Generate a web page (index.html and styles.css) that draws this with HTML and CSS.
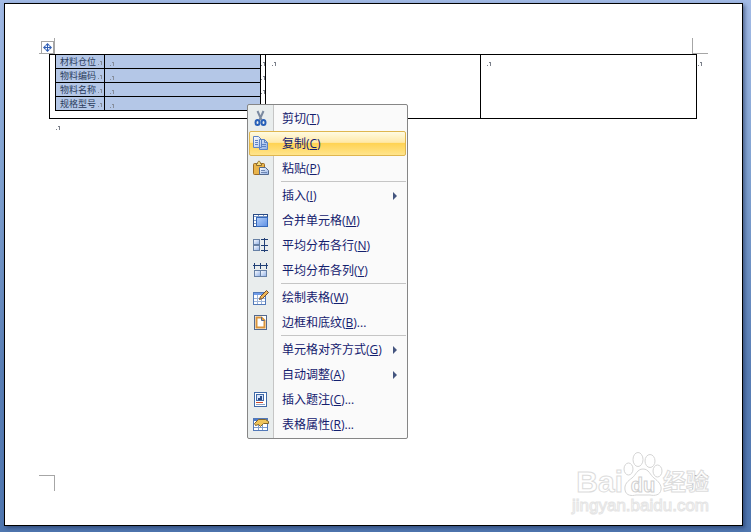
FILE: index.html
```html
<!DOCTYPE html>
<html lang="zh-CN">
<head>
<meta charset="utf-8">
<title>表格右键菜单</title>
<link rel="stylesheet" href="styles.css">
</head>
<body>
<svg class="defs" width="0" height="0">
  <symbol id="mark" viewBox="0 0 5 4"><path d="M0 3h1v1H0zM2 0h2v4H3V1H2z" fill="#7b808a"/></symbol>
  <linearGradient id="blue" x1="0" y1="0" x2="1" y2="1"><stop offset="0" stop-color="#fff"/><stop offset="1" stop-color="#8fb0e6"/></linearGradient>
  <linearGradient id="cell" x1="0" y1="0" x2="1" y2="1"><stop offset="0" stop-color="#b4d0fa"/><stop offset="1" stop-color="#5d8fe4"/></linearGradient>
</svg>

<main class="page">
  <div class="crops crops-top">
    <span class="crop top-left">
      <svg class="handle" width="14" height="14"><rect x=".5" y=".5" width="12" height="12" fill="#fff" stroke="#a5a5a5"/><path d="M6.500 3v7M3 6.500h7" stroke="#315fb5"/><path d="M4 4.500L6.500 2 9 4.500zM4 8.500L6.500 11 9 8.500zM4.500 4L2 6.500 4.500 9zM8.500 4L11 6.500 8.500 9z" fill="#315fb5"/></svg>
    </span>
    <span class="crop top-right"></span>
  </div>

  <table class="layout">
    <tr>
      <td class="holder">
        <div class="nested">
          <table class="fields">
            <tr><th>材料仓位<svg class="mark"><use href="#mark"/></svg></th><td><svg class="mark"><use href="#mark"/></svg></td></tr>
            <tr><th>物料编码<svg class="mark"><use href="#mark"/></svg></th><td><svg class="mark"><use href="#mark"/></svg></td></tr>
            <tr><th>物料名称<svg class="mark"><use href="#mark"/></svg></th><td><svg class="mark"><use href="#mark"/></svg></td></tr>
            <tr><th>规格型号<svg class="mark"><use href="#mark"/></svg></th><td><svg class="mark"><use href="#mark"/></svg></td></tr>
          </table>
          <div class="row-marks">
            <svg class="mark"><use href="#mark"/></svg>
            <svg class="mark"><use href="#mark"/></svg>
            <svg class="mark"><use href="#mark"/></svg>
          </div>
        </div>
      </td>
      <td><svg class="mark"><use href="#mark"/></svg></td>
      <td class="last"><svg class="mark"><use href="#mark"/></svg><svg class="mark row-end"><use href="#mark"/></svg></td>
    </tr>
  </table>
  <p class="after"><svg class="mark"><use href="#mark"/></svg></p>

  <div class="crops crops-bottom">
    <span class="crop bottom-left"></span>
    <span class="crop bottom-right"></span>
  </div>

  <div class="watermark">
    <div class="brand">
      <span>Bai</span>
      <svg class="paw" width="40" height="44" viewBox="0 0 40 44"><g fill="#fff" stroke="#d5d5d5"><ellipse cx="5.500" cy="17" rx="4.500" ry="6"/><ellipse cx="15" cy="7.500" rx="5" ry="7"/><ellipse cx="27" cy="9" rx="5" ry="6.500"/><ellipse cx="34.500" cy="19" rx="4.500" ry="6"/><path d="M20 17c-6 0-7 6-11 9s-8 6-7 12 7 6 11 5h14c5 1 10 0 11-5s-3-9-7-12-5-9-11-9z"/></g><text x="20" y="40" text-anchor="middle">du</text></svg>
      <span class="cn">经验</span>
    </div>
    <div class="site">jingyan.baidu.com</div>
  </div>
</main>

<menu class="context">
  <li><button><svg width="18" height="18"><path d="M5.500 1l4 9M11.500 1l-4 9" stroke="#7b8aa0" stroke-width="2"/><g fill="none" stroke="#2860b8" stroke-width="2"><ellipse cx="5.500" cy="12.500" rx="2" ry="2.500"/><ellipse cx="11.500" cy="12.500" rx="2" ry="2.500"/></g></svg><span>剪切(<u>T</u>)</span></button></li>
  <li><button class="active"><svg width="18" height="18"><g fill="url(#blue)" stroke="#5d82c4"><path d="M1.500 1.500h5l3 3v8h-8zM7.500 4.500h5l3 3v7h-8z"/><path d="M12.500 4.500v3h3M3 5.500h3M3 7.500h3M3 9.500h3M9 9.500h5M9 11.500h5" fill="none"/></g></svg><span>复制(<u>C</u>)</span></button></li>
  <li><button><svg width="18" height="18"><rect x="1.500" y="3.500" width="11" height="11" rx="1" fill="#e9b44b" stroke="#9c6b22"/><path d="M4.500 5.500v-2h1c0-3 3-3 3 0h1v2z" fill="#f7dd82" stroke="#8a6b2e"/><path d="M7.500 7.500h6l3 3v4h-9z" fill="url(#blue)" stroke="#52698f"/><path d="M9 10.500h4M9 12.500h6" stroke="#6e87b4"/></svg><span>粘贴(<u>P</u>)</span></button></li>
  <li class="line"></li>
  <li><button><i></i><span>插入(<u>I</u>)</span><b class="arrow"></b></button></li>
  <li><button><svg width="18" height="18"><rect x="1.500" y="2.500" width="14" height="12" fill="#fff" stroke="#294b86"/><path d="M2 4.500h13M2 8.500h2M2 11.500h2M6.500 3v2M11.500 3v2" stroke="#7b98c6"/><rect x="4.500" y="5.500" width="11" height="9" fill="url(#cell)" stroke="#3569bc"/></svg><span>合并单元格(<u>M</u>)</span></button></li>
  <li><button><svg width="18" height="18"><g fill="url(#blue)" stroke="#6680a5"><rect x="1.500" y="2.500" width="6" height="5"/><rect x="1.500" y="8.500" width="6" height="5"/></g><path d="M9 2.500h7M9 8.500h7M9 13.500h7M12.500 1v14" stroke="#203f75"/></svg><span>平均分布各行(<u>N</u>)</span></button></li>
  <li><button><svg width="18" height="18"><g fill="url(#blue)" stroke="#6680a5"><rect x="2.500" y="8.500" width="6" height="6"/><rect x="8.500" y="8.500" width="6" height="6"/></g><path d="M1 3.500h15M2.500 1v6M8.500 1v6M14.500 1v6" stroke="#203f75"/></svg><span>平均分布各列(<u>Y</u>)</span></button></li>
  <li class="line"></li>
  <li><button><svg width="18" height="18"><rect x="1.500" y="3.500" width="12" height="12" fill="#fff" stroke="#5279b8"/><path d="M2 5h11" stroke="#6f9be8" stroke-width="2"/><path d="M2 9.500h11M2 12.500h11M5.500 6v9M9.500 6v9" stroke="#9db5db"/><path d="M7.500 10.500l1-3 6-6 2 2-6 6z" fill="#efb757" stroke="#6d4b32"/></svg><span>绘制表格(<u>W</u>)</span></button></li>
  <li><button><svg width="18" height="18"><rect x="2.500" y="1.500" width="12" height="14" fill="#fff" stroke="#52698f"/><path d="M4.500 3.500h5l3 3v7h-8z" fill="#fff" stroke="#d9943a" stroke-width="2"/><path d="M9.500 3v3.500h3" fill="none" stroke="#52698f"/></svg><span>边框和底纹(<u>B</u>)...</span></button></li>
  <li class="line"></li>
  <li><button><i></i><span>单元格对齐方式(<u>G</u>)</span><b class="arrow"></b></button></li>
  <li><button><i></i><span>自动调整(<u>A</u>)</span><b class="arrow"></b></button></li>
  <li><button><svg width="18" height="18"><rect x="2.500" y="1.500" width="12" height="14" fill="#fff" stroke="#3f69a8"/><rect x="4.500" y="3.500" width="7" height="6" fill="#d7e4fa" stroke="#3f69a8"/><path d="M6 9V7h2V5h2v4z" fill="#294b86"/><path d="M4 11.500h7" stroke="#cf4e2f"/><path d="M4 13.500h9" stroke="#8ba2c4"/></svg><span>插入题注(<u>C</u>)...</span></button></li>
  <li><button><svg width="18" height="18"><rect x="1.500" y="2.500" width="14" height="12" fill="#fff" stroke="#5279b8"/><path d="M2 4h13" stroke="#4b78ca" stroke-width="2"/><path d="M2 11.500h13M6.500 6v8M10.500 6v8" stroke="#7f9dcc"/><path d="M2.500 7.500l4-4h7l3 2v2h-5l-3 3-2-2-3 1z" fill="#efc45a" stroke="#80652d"/></svg><span>表格属性(<u>R</u>)...</span></button></li>
</menu>
</body>
</html>
```
FILE: styles.css
```css
* { box-sizing: border-box; }
body {
  display: flex;
  min-height: 100vh;
  margin: 0;
  padding: 3px 8px 6px 4px;
  background: linear-gradient(#a3bbe6, #84a5d3 30%, #5a7fb6 70%, #5077b0);
  font-family: "Open Sans", "Noto Sans CJK SC", sans-serif;
}
.defs { position: absolute; }

/* document sheet */
.page {
  position: relative;
  flex: 1;
  display: flex;
  flex-direction: column;
  border: 1px solid #000;
  background: #fff;
  box-shadow: 2px 2px 4px rgba(30, 50, 90, .6);
}
.crops { display: flex; justify-content: space-between; padding: 0 34px; }
.crops-top { padding-top: 34px; }
.crops-bottom { margin-top: auto; padding-bottom: 34px; }
.crop { position: relative; width: 16px; height: 16px; border: 0 solid #a6a6a6; }
.top-left { border-width: 0 1px 1px 0; }
.top-right { border-width: 0 0 1px 1px; }
.bottom-left { border-width: 1px 1px 0 0; }
.bottom-right { border-width: 1px 0 0 1px; }
.handle { position: absolute; right: -1px; bottom: -2px; }

.mark { display: block; width: 5px; height: 4px; }
table { border-spacing: 0; }
td, th { padding: 0; vertical-align: top; border: 0 solid #000; border-width: 0 1px 1px 0; }
.layout { table-layout: fixed; width: calc(100% - 89px); height: 65px; margin-left: 44px; border: 1px solid #000; border-width: 1px 0 0 1px; }
.layout > tbody > tr > td { padding: 7px 0 0 6px; }
.layout > tbody > tr > .holder { padding: 0 0 0 5px; }
.last { position: relative; }
.row-end { position: absolute; top: 7px; right: -7px; }

.nested { display: flex; }
.fields { flex: 1; border-left: 1px solid #000; background: #b4c7e7; }
.fields tr { height: 14px; }
.fields th { width: 49px; padding-left: 4px; font-size: 9px; line-height: 13px; font-weight: normal; text-align: left; color: #2b3c5c; }
.fields th .mark { display: inline-block; margin-left: 2px; }
.fields .mark { opacity: .8; }
.fields td { padding: 7px 0 0 5px; }
.row-marks { display: grid; grid-auto-rows: 14px; width: 4px; padding-top: 7px; align-content: start; }
.after { margin: 7px 0 0 51px; }

.watermark { position: absolute; right: 33px; bottom: 9px; color: #fff; font-family: "Liberation Sans", "Noto Sans CJK SC", sans-serif; -webkit-text-stroke: 1px #dcdcdc; }
.brand { display: flex; align-items: flex-end; justify-content: flex-end; font-size: 30px; line-height: 28px; font-weight: bold; }
.brand .cn { font-size: 23px; }
.paw { display: block; }
.paw text { font-size: 20px; fill: #fff; stroke: #d0d0d0; }
.site { font-size: 17px; line-height: 20px; -webkit-text-stroke-color: #e4e4e4; }

/* context menu */
.context {
  position: absolute;
  left: 247px;
  top: 104px;
  width: 161px;
  margin: 0;
  padding: 1px;
  list-style: none;
  border: 1px solid #868686;
  border-radius: 2px;
  background: linear-gradient(90deg, #e9eded 25px, #c5c5c5 25px, #c5c5c5 26px, #fafafa 26px);
}
.context button {
  display: flex;
  align-items: center;
  width: 100%;
  height: 25px;
  padding: 0 8px 0 2px;
  border: 1px solid transparent;
  border-radius: 2px;
  background: none;
  color: #14206e;
  font: 12px/23px "Open Sans", "Noto Sans CJK SC", sans-serif;
  white-space: nowrap;
}
.context button.active { border-color: #dfb64f; background: linear-gradient(#fffbe2, #ffe9a8 45%, #ffd353 50%, #ffe48c); }
.context svg, .context i { flex: none; width: 18px; height: 18px; margin-right: 12px; }
.line { height: 2px; margin-left: 32px; border-top: 1px solid #c5c5c5; }
.arrow { margin-left: auto; border: 4px solid transparent; border-left-color: #44557f; border-right: 0; }
```
